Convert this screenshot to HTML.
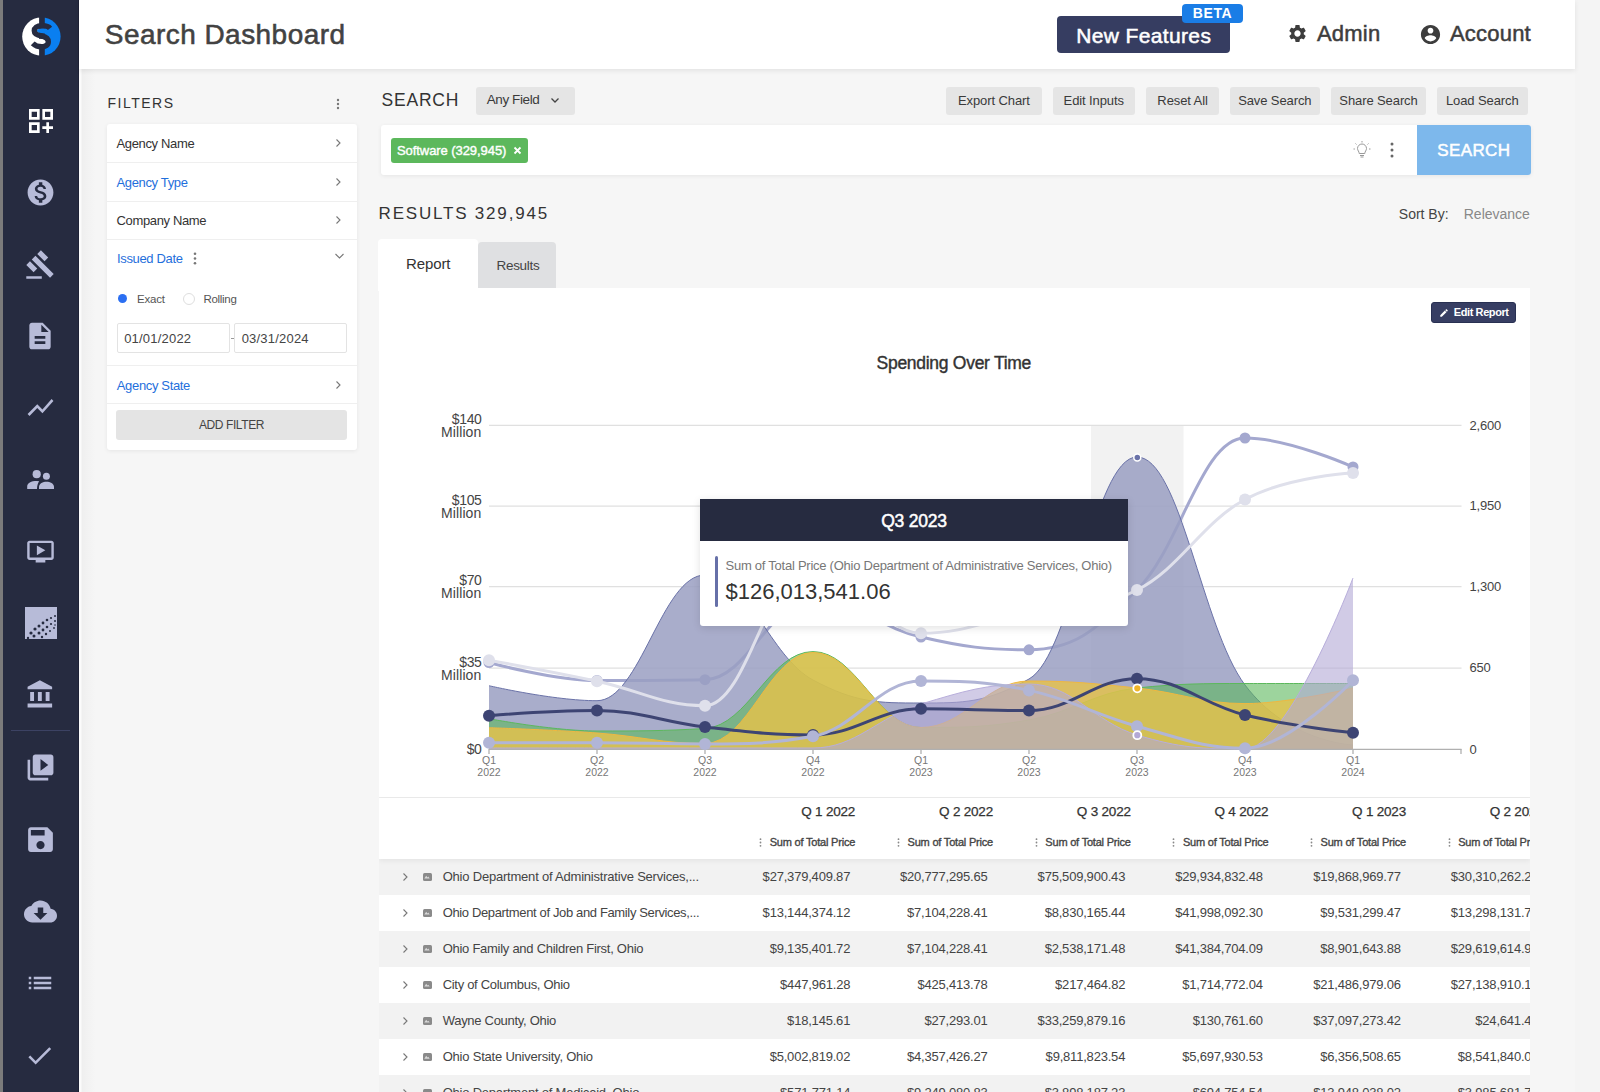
<!DOCTYPE html>
<html><head><meta charset="utf-8"><title>Search Dashboard</title>
<style>
*{box-sizing:border-box;margin:0;padding:0}
html,body{width:1600px;height:1092px;overflow:hidden;background:#f6f6f6;font-family:"Liberation Sans",sans-serif;color:#333}
.a{position:absolute}
.t{position:absolute;white-space:nowrap;line-height:1}
.card{position:absolute;background:#fff;border-radius:3px;box-shadow:0 1px 4px rgba(0,0,0,.07)}
.gbtn{position:absolute;background:#e5e5e5;border-radius:3px;height:28px;top:87px}
.sep{position:absolute;height:1px;background:#efefef}
</style></head>
<body>
<div class="a" style="left:0;top:0;width:3px;height:1092px;background:#7b7b7b"></div>
<div class="a" style="left:3px;top:0;width:76px;height:1092px;background:#262b40;border-right:1px solid #1e2236"></div>
<div class="a" style="left:1575px;top:0;width:25px;height:1092px;background:#f4f4f4"></div>
<div class="a" style="left:79px;top:0;width:16px;height:1092px;background:linear-gradient(90deg,#fbfbfb 0,#fbfbfb 2px,#efefef 3px,#f6f6f6 16px)"></div>
<svg class="a" style="left:19px;top:14px" width="45" height="45" viewBox="-22.4 -22.6 45 45">
<defs><clipPath id="lc"><circle cx="0" cy="0" r="19.2"/></clipPath></defs>
<g clip-path="url(#lc)">
<rect x="-20" y="-20" width="17.7" height="40" fill="#ffffff"/>
<rect x="3.4" y="-20" width="17" height="40" fill="#0a7ff0"/>
<ellipse cx="2.2" cy="-5.8" rx="6.8" ry="2.8" fill="#0a7ff0"/>
<ellipse cx="-0.8" cy="5.0" rx="6" ry="2.8" fill="#ffffff"/>
<path d="M8.6,-8.3 C6.5,-11 3,-10.8 0.3,-10.8 C-4.5,-10.8 -7.1,-8.5 -7.1,-5.8 C-7.1,-2.5 -3.5,-1.2 0.3,-0.6 C4,0.2 6.9,2 6.9,5.2 C6.9,8.5 4,10.2 0.3,10.2 C-3.5,10.2 -6.5,9 -8.7,6.8" fill="none" stroke="#262b40" stroke-width="5.4"/>
</g></svg>
<div class="a" style="left:11px;top:730px;width:59px;height:1px;background:#3c4263"></div>
<svg class="a" style="left:24.50px;top:104.50px" width="32" height="32" viewBox="0 0 24 24"><path fill="#ffffff" d="M3 3h8v8H3zm2 2v4h4V5zm8-2h8v8h-8zm2 2v4h4V5zM3 13h8v8H3zm2 2v4h4v-4zm13-2h-2v3h-3v2h3v3h2v-3h3v-2h-3z"/></svg>
<svg class="a" style="left:25.00px;top:176.50px" width="31" height="31" viewBox="0 0 24 24"><path fill="#b7bbd8" d="M12 2C6.48 2 2 6.48 2 12s4.48 10 10 10 10-4.48 10-10S17.52 2 12 2zm1.41 16.09V20h-2.67v-1.93c-1.71-.36-3.16-1.46-3.27-3.4h1.96c.1 1.05.82 1.87 2.65 1.87 1.96 0 2.4-.98 2.4-1.59 0-.83-.44-1.61-2.67-2.14-2.48-.6-4.18-1.62-4.18-3.67 0-1.72 1.39-2.84 3.11-3.21V4h2.67v1.95c1.860.45 2.79 1.86 2.85 3.39H14.3c-.05-1.11-.64-1.87-2.22-1.870-1.5 0-2.4.68-2.4 1.64 0 .84.65 1.39 2.67 1.91s4.18 1.39 4.18 3.91c-.01 1.83-1.38 2.83-3.12 3.16z"/></svg>
<svg class="a" style="left:24.82px;top:248.50px" width="31" height="31" viewBox="0 0 24 24"><path fill="#b7bbd8" d="M1 21h12v2H1zM5.245 8.07l2.83-2.827 14.14 14.142-2.828 2.828zM12.317 1l5.657 5.656-2.83 2.830-5.654-5.66zM3.825 9.485l5.657 5.657-2.828 2.828-5.657-5.657z"/></svg>
<svg class="a" style="left:24.40px;top:319.80px" width="32" height="32" viewBox="0 0 24 24"><path fill="#b7bbd8" d="M14 2H6c-1.1 0-1.99.9-1.99 2L4 20c0 1.1.89 2 1.99 2H18c1.1 0 2-.9 2-2V8l-6-6zm2 16H8v-2h8v2zm0-4H8v-2h8v2zm-3-5V3.5L18.5 9H13z"/></svg>
<svg class="a" style="left:24.90px;top:392.30px" width="31" height="31" viewBox="0 0 24 24"><path fill="#b7bbd8" d="M3.5 18.49l6-6.01 4 4L22 6.92l-1.41-1.41-7.09 7.97-4-4L2 16.99z"/></svg>
<svg class="a" style="left:20px;top:460px" width="40" height="40" viewBox="20 460 40 40"><g fill="#b7bbd8"><circle cx="36.7" cy="474.2" r="4.1"/><circle cx="46.4" cy="476.2" r="3.5"/><path d="M27.2,489 L27.2,486.5 C27.2,483 31,481 37,481 L39.2,481.2 C37.8,483 37,486 37,489 Z"/><path d="M39,489 L39,487 C39,483.5 43,481.8 46.5,481.8 C50,481.8 54,483.5 54,487 L54,489 Z"/></g></svg>
<svg class="a" style="left:26.10px;top:536.80px" width="29" height="29" viewBox="0 0 24 24"><path fill="#b7bbd8" d="M21 3H3c-1.11 0-2 .89-2 2v12c0 1.1.89 2 2 2h5v2h8v-2h5c1.1 0 1.99-.9 1.99-2L23 5c0-1.11-.9-2-2-2zm0 14H3V5h18v12zM16 11l-7 4V7z"/></svg>
<svg class="a" style="left:24.5px;top:606.5px" width="32" height="32" viewBox="0 0 32 32"><rect x="0" y="0" width="32" height="32" fill="#b7bbd8"/>
<g fill="#262b40"><circle cx="6" cy="26" r="1.6"/><circle cx="10" cy="22" r="1.6"/><circle cx="14" cy="19" r="1.5"/><circle cx="18" cy="16" r="1.4"/><circle cx="22" cy="13" r="1.3"/><circle cx="26" cy="11" r="1.1"/><circle cx="30" cy="9" r="1"/><circle cx="9" cy="29" r="1.5"/><circle cx="14" cy="26" r="1.5"/><circle cx="18" cy="23" r="1.4"/><circle cx="22" cy="20" r="1.3"/><circle cx="26" cy="17" r="1.1"/><circle cx="30" cy="14" r="1"/><circle cx="3" cy="31" r="1.2"/><circle cx="17" cy="30" r="1.2"/><circle cx="21" cy="27" r="1.2"/><circle cx="25" cy="24" r="1"/><circle cx="29" cy="21" r="0.9"/><circle cx="30" cy="18" r="0.8"/></g></svg>
<svg class="a" style="left:25.35px;top:679.15px" width="31" height="31" viewBox="0 0 24 24"><path fill="#b7bbd8" d="M4 10v7h3v-7H4zm6 0v7h3v-7h-3zM2 22h19v-3H2v3zm14-12v7h3v-7h-3zm-4.5-9L2 6v2h19V6l-9.5-5z"/></svg>
<svg class="a" style="left:25.00px;top:752.30px" width="31" height="31" viewBox="0 0 24 24"><path fill="#b7bbd8" d="M4 6H2v14c0 1.1.9 2 2 2h14v-2H4V6zm16-4H8c-1.1 0-2 .9-2 2v12c0 1.1.9 2 2 2h12c1.1 0 2-.9 2-2V4c0-1.1-.9-2-2-2zm-8 12.5v-9l6 4.5-6 4.5z"/></svg>
<svg class="a" style="left:23.90px;top:823.00px" width="33" height="33" viewBox="0 0 24 24"><path fill="#b7bbd8" d="M17 3H5c-1.11 0-2 .9-2 2v14c0 1.1.89 2 2 2h14c1.1 0 2-.9 2-2V7l-4-4zm-5 16c-1.66 0-3-1.34-3-3s1.34-3 3-3 3 1.34 3 3-1.34 3-3 3zm3-10H5V5h10v4z"/></svg>
<svg class="a" style="left:24.00px;top:894.50px" width="33" height="33" viewBox="0 0 24 24"><path fill="#b7bbd8" d="M19.35 10.04C18.67 6.59 15.64 4 12 4 9.11 4 6.6 5.64 5.35 8.04 2.34 8.36 0 10.91 0 14c0 3.31 2.69 6 6 6h13c2.76 0 5-2.24 5-5 0-2.64-2.05-4.78-4.65-4.96zM17 13l-5 5-5-5h3V9h4v4h3z"/></svg>
<svg class="a" style="left:25.40px;top:968.00px" width="30" height="30" viewBox="0 0 24 24"><path fill="#b7bbd8" d="M3 13h2v-2H3v2zm0 4h2v-2H3v2zm0-8h2V7H3v2zm4 4h14v-2H7v2zm0 4h14v-2H7v2zM7 7v2h14V7H7z"/></svg>
<svg class="a" style="left:24.44px;top:1039.61px" width="31" height="31" viewBox="0 0 24 24"><path fill="#b7bbd8" d="M9 16.17L4.83 12l-1.42 1.41L9 19 21 7l-1.41-1.41z"/></svg>
<div class="a" style="left:79px;top:0;width:1496px;height:69px;background:#fff;box-shadow:0 2px 5px rgba(0,0,0,.08)"></div>
<div class="t" style="top:20.80px;font-size:28px;color:#424242;letter-spacing:0.45px;left:104.80px;-webkit-text-stroke:0.55px #424242;">Search Dashboard</div>
<div class="a" style="left:1057px;top:16px;width:173px;height:37px;background:#363d61;border-radius:4px"></div>
<div class="t" style="top:24.72px;font-size:21px;color:#ffffff;letter-spacing:0.35px;left:843.80px;width:600px;text-align:center;-webkit-text-stroke:0.5px #ffffff;">New Features</div>
<div class="a" style="left:1182px;top:4px;width:61px;height:19px;background:#1a7de6;border-radius:4px"></div>
<div class="t" style="top:6.45px;font-size:14px;color:#ffffff;font-weight:700;letter-spacing:0.6px;left:912.50px;width:600px;text-align:center;">BETA</div>
<svg class="a" style="left:1287px;top:23px" width="21" height="21" viewBox="0 0 24 24"><path fill="#3d3d3d" d="M19.14 12.94c.04-.3.06-.61.06-.94 0-.32-.02-.64-.07-.94l2.03-1.58c.18-.14.23-.41.12-.61l-1.92-3.32c-.12-.22-.37-.29-.59-.22l-2.39.96c-.5-.38-1.03-.7-1.62-.94l-.36-2.54c-.04-.24-.24-.41-.48-.41h-3.84c-.24 0-.43.17-.47.41l-.36 2.54c-.59.24-1.13.57-1.62.94l-2.39-.96c-.22-.08-.47 0-.59.22L2.74 8.87c-.12.21-.08.47.12.61l2.03 1.58c-.05.3-.09.63-.09.94s.02.64.07.94l-2.03 1.58c-.18.14-.23.41-.12.61l1.92 3.32c.12.22.37.29.59.22l2.39-.96c.5.38 1.03.7 1.62.94l.36 2.54c.05.24.24.41.48.41h3.84c.24 0 .44-.17.47-.41l.36-2.54c.59-.24 1.13-.56 1.62-.94l2.39.96c.22.08.47 0 .59-.22l1.92-3.32c.12-.22.07-.47-.12-.61l-2.01-1.58zM12 15.6c-1.98 0-3.6-1.62-3.6-3.6s1.62-3.6 3.6-3.6 3.6 1.62 3.6 3.6-1.62 3.6-3.6 3.6z"/></svg>
<div class="t" style="top:23.38px;font-size:22px;color:#3d3d3d;letter-spacing:0.2px;left:1317.00px;-webkit-text-stroke:0.5px #3d3d3d;">Admin</div>
<svg class="a" style="left:1418.5px;top:22.5px" width="23" height="23" viewBox="0 0 24 24"><path fill="#3d3d3d" d="M12 2C6.48 2 2 6.48 2 12s4.48 10 10 10 10-4.48 10-10S17.52 2 12 2zm0 3c1.66 0 3 1.34 3 3s-1.34 3-3 3-3-1.34-3-3 1.34-3 3-3zm0 14.2c-2.5 0-4.71-1.28-6-3.22.03-1.99 4-3.08 6-3.08 1.99 0 5.97 1.09 6 3.08-1.29 1.94-3.5 3.22-6 3.22z"/></svg>
<div class="t" style="top:23.38px;font-size:22px;color:#3d3d3d;letter-spacing:0.2px;left:1450.00px;-webkit-text-stroke:0.5px #3d3d3d;">Account</div>
<div class="t" style="top:96.45px;font-size:14px;color:#333;letter-spacing:1.5px;left:107.50px;">FILTERS</div>
<svg class="a" style="left:336px;top:98px" width="4" height="12" viewBox="0 0 4 12"><circle cx="2" cy="2" r="1.2" fill="#777"/><circle cx="2" cy="6" r="1.2" fill="#777"/><circle cx="2" cy="10" r="1.2" fill="#777"/></svg>
<div class="card" style="left:107px;top:124px;width:250px;height:326px"></div>
<div class="t" style="top:137.30px;font-size:13px;color:#333;letter-spacing:-0.35px;left:116.50px;">Agency Name</div>
<svg class="a" style="left:334px;top:138.3px" width="8" height="10" viewBox="0 0 8 10"><path d="M2.5 1.5 L6 5 L2.5 8.5" fill="none" stroke="#777" stroke-width="1.1"/></svg>
<div class="sep" style="left:107px;top:162.1px;width:250px"></div>
<div class="t" style="top:176.00px;font-size:13px;color:#1f6fdc;letter-spacing:-0.35px;left:116.50px;">Agency Type</div>
<svg class="a" style="left:334px;top:177.0px" width="8" height="10" viewBox="0 0 8 10"><path d="M2.5 1.5 L6 5 L2.5 8.5" fill="none" stroke="#777" stroke-width="1.1"/></svg>
<div class="sep" style="left:107px;top:200.9px;width:250px"></div>
<div class="t" style="top:214.40px;font-size:13px;color:#333;letter-spacing:-0.35px;left:116.50px;">Company Name</div>
<svg class="a" style="left:334px;top:215.4px" width="8" height="10" viewBox="0 0 8 10"><path d="M2.5 1.5 L6 5 L2.5 8.5" fill="none" stroke="#777" stroke-width="1.1"/></svg>
<div class="sep" style="left:107px;top:238.9px;width:250px"></div>
<div class="t" style="top:252.10px;font-size:13px;color:#1f6fdc;letter-spacing:-0.35px;left:117.00px;">Issued Date</div>
<svg class="a" style="left:193px;top:252px" width="4" height="13" viewBox="0 0 4 13"><circle cx="2" cy="1.8" r="1.3" fill="#777"/><circle cx="2" cy="6.5" r="1.3" fill="#777"/><circle cx="2" cy="11.2" r="1.3" fill="#777"/></svg>
<svg class="a" style="left:334px;top:252px" width="11" height="8" viewBox="0 0 11 8"><path d="M1.5 2 L5.5 6 L9.5 2" fill="none" stroke="#777" stroke-width="1.1"/></svg>
<div class="a" style="left:117.7px;top:293.8px;width:9.6px;height:9.6px;border-radius:50%;background:#2b6ff2"></div>
<div class="t" style="top:293.57px;font-size:11.5px;color:#555;letter-spacing:-0.2px;left:137.00px;">Exact</div>
<div class="a" style="left:183px;top:292.6px;width:12px;height:12px;border-radius:50%;border:1px solid #dedede;background:#fff"></div>
<div class="t" style="top:293.57px;font-size:11.5px;color:#555;letter-spacing:-0.3px;left:203.50px;">Rolling</div>
<div class="a" style="left:117px;top:322.5px;width:113px;height:30px;border:1px solid #e3e3e3;border-radius:2px"></div>
<div class="t" style="top:332.10px;font-size:13px;color:#444;letter-spacing:0.2px;left:124.20px;">01/01/2022</div>
<div class="a" style="left:230.5px;top:338px;width:3px;height:1px;background:#999"></div>
<div class="a" style="left:234.4px;top:322.5px;width:112.6px;height:30px;border:1px solid #e3e3e3;border-radius:2px"></div>
<div class="t" style="top:332.10px;font-size:13px;color:#444;letter-spacing:0.2px;left:241.70px;">03/31/2024</div>
<div class="sep" style="left:107px;top:365px;width:250px"></div>
<div class="t" style="top:378.50px;font-size:13px;color:#1f6fdc;letter-spacing:-0.35px;left:116.80px;">Agency State</div>
<svg class="a" style="left:334px;top:379.5px" width="8" height="10" viewBox="0 0 8 10"><path d="M2.5 1.5 L6 5 L2.5 8.5" fill="none" stroke="#777" stroke-width="1.1"/></svg>
<div class="sep" style="left:107px;top:403px;width:250px"></div>
<div class="a" style="left:116.3px;top:409.5px;width:231.2px;height:30.5px;background:#e4e4e4;border-radius:3px"></div>
<div class="t" style="top:418.94px;font-size:12px;color:#444;letter-spacing:-0.4px;left:-68.50px;width:600px;text-align:center;">ADD FILTER</div>
<div class="t" style="top:91.79px;font-size:17.5px;color:#333;letter-spacing:0.8px;left:381.50px;">SEARCH</div>
<div class="a" style="left:476px;top:87px;width:98.5px;height:28px;background:#e5e5e5;border-radius:3px"></div>
<div class="t" style="top:93.27px;font-size:13.5px;color:#3a3a3a;letter-spacing:-0.4px;left:486.70px;">Any Field</div>
<svg class="a" style="left:550px;top:97px" width="10" height="7" viewBox="0 0 10 7"><path d="M1.5 1.5 L5 5 L8.5 1.5" fill="none" stroke="#444" stroke-width="1.3"/></svg>
<div class="gbtn" style="left:946.2px;width:95.4px"></div>
<div class="t" style="top:93.75px;font-size:13px;color:#3a3a3a;letter-spacing:-0.1px;left:693.90px;width:600px;text-align:center;">Export Chart</div>
<div class="gbtn" style="left:1052.5px;width:82.5px"></div>
<div class="t" style="top:93.75px;font-size:13px;color:#3a3a3a;letter-spacing:-0.1px;left:793.75px;width:600px;text-align:center;">Edit Inputs</div>
<div class="gbtn" style="left:1146.3px;width:72.5px"></div>
<div class="t" style="top:93.75px;font-size:13px;color:#3a3a3a;letter-spacing:-0.1px;left:882.55px;width:600px;text-align:center;">Reset All</div>
<div class="gbtn" style="left:1230.0px;width:89.6px"></div>
<div class="t" style="top:93.75px;font-size:13px;color:#3a3a3a;letter-spacing:-0.1px;left:974.80px;width:600px;text-align:center;">Save Search</div>
<div class="gbtn" style="left:1331.0px;width:95.0px"></div>
<div class="t" style="top:93.75px;font-size:13px;color:#3a3a3a;letter-spacing:-0.1px;left:1078.50px;width:600px;text-align:center;">Share Search</div>
<div class="gbtn" style="left:1437.0px;width:90.6px"></div>
<div class="t" style="top:93.75px;font-size:13px;color:#3a3a3a;letter-spacing:-0.1px;left:1182.30px;width:600px;text-align:center;">Load Search</div>
<div class="card" style="left:381px;top:125px;width:1150px;height:50px;border-radius:3px"></div>
<div class="a" style="left:1417px;top:125px;width:114px;height:50px;background:#7db8ec;border-radius:0 3px 3px 0"></div>
<div class="t" style="top:141.51px;font-size:17px;color:#ffffff;letter-spacing:0.4px;left:1173.80px;width:600px;text-align:center;-webkit-text-stroke:0.5px #ffffff;">SEARCH</div>
<div class="a" style="left:391.3px;top:137.8px;width:136.8px;height:24.8px;background:#5cb85c;border-radius:3px"></div>
<div class="t" style="top:143.70px;font-size:13px;color:#ffffff;letter-spacing:-0.07px;left:397.00px;-webkit-text-stroke:0.4px #ffffff;">Software (329,945)</div>
<svg class="a" style="left:513px;top:146px" width="9" height="9" viewBox="0 0 9 9"><path d="M1.5 1.5 L7.5 7.5 M7.5 1.5 L1.5 7.5" stroke="#fff" stroke-width="1.8"/></svg>
<svg class="a" style="left:1352px;top:140px" width="20" height="20" viewBox="0 0 20 20" fill="none" stroke="#999" stroke-width="1">
<path d="M7.2 13.5 C7.2 11.5 5.5 10.5 5.5 8.5 A4.5 4.5 0 0 1 14.5 8.5 C14.5 10.5 12.8 11.5 12.8 13.5 Z"/><path d="M8 15.5 H12 M8.5 17 H11.5"/>
<path d="M10 1 V2.5 M3.5 3.5 L4.5 4.5 M16.5 3.5 L15.5 4.5 M1.5 9 H3 M17 9 H18.5" stroke-dasharray="1 0"/></svg>
<svg class="a" style="left:1390px;top:142px" width="4" height="16" viewBox="0 0 4 16"><circle cx="2" cy="2" r="1.5" fill="#666"/><circle cx="2" cy="8" r="1.5" fill="#666"/><circle cx="2" cy="14" r="1.5" fill="#666"/></svg>
<div class="t" style="top:205.01px;font-size:17px;color:#333;letter-spacing:1.8px;left:378.60px;">RESULTS 329,945</div>
<div class="t" style="top:206.90px;font-size:14px;color:#444;left:1398.80px;">Sort By:</div>
<div class="t" style="top:206.90px;font-size:14px;color:#888;left:1463.75px;">Relevance</div>
<div class="a" style="left:478px;top:242px;width:78px;height:46px;background:#dfe0e2;border-radius:4px 4px 0 0"></div>
<div class="a" style="left:378px;top:239px;width:100px;height:52px;background:#fff;border-radius:4px 4px 0 0"></div>
<div class="t" style="top:256.30px;font-size:15px;color:#333;letter-spacing:-0.1px;left:406.00px;">Report</div>
<div class="t" style="top:258.57px;font-size:13.5px;color:#444;letter-spacing:-0.3px;left:496.50px;">Results</div>
<div class="a" style="left:379px;top:288px;width:1151px;height:509px;background:#fff"></div>
<div class="a" style="left:1431px;top:302px;width:85px;height:21px;background:#373e63;border:1px solid #283052;border-radius:3px"></div>
<svg class="a" style="left:1438.5px;top:307.5px" width="10" height="10" viewBox="0 0 24 24"><path fill="#fff" d="M3 17.25V21h3.75L17.81 9.94l-3.75-3.75L3 17.25zM20.71 7.04c.39-.39.39-1.02 0-1.41l-2.34-2.34c-.39-.39-1.02-.39-1.41 0l-1.83 1.83 3.75 3.75 1.83-1.83z"/></svg>
<div class="t" style="top:307.44px;font-size:11px;color:#ffffff;font-weight:700;letter-spacing:-0.4px;left:1453.75px;">Edit Report</div>
<div class="t" style="top:355.09px;font-size:17.5px;color:#333;letter-spacing:-0.28px;left:653.80px;width:600px;text-align:center;-webkit-text-stroke:0.4px #333;">Spending Over Time</div>
<svg class="a" style="left:0;top:0" width="1600" height="1092" viewBox="0 0 1600 1092"><rect x="1091" y="425" width="92.5" height="324.3" fill="#f2f2f2"/><line x1="489" y1="425.3" x2="1461.5" y2="425.3" stroke="#e0e0e0" stroke-width="1.2"/><line x1="489" y1="506.1" x2="1461.5" y2="506.1" stroke="#e0e0e0" stroke-width="1.2"/><line x1="489" y1="586.6" x2="1461.5" y2="586.6" stroke="#e0e0e0" stroke-width="1.2"/><line x1="489" y1="668.2" x2="1461.5" y2="668.2" stroke="#e0e0e0" stroke-width="1.2"/><path d="M489.00,662.50 C489.00,662.50 553.80,680.50 597.00,680.50 C640.20,680.50 661.80,680.50 705.00,679.70 C748.20,678.90 769.80,600.00 813.00,600.00 C856.20,600.00 877.80,627.04 921.00,637.00 C964.20,646.96 985.80,649.80 1029.00,649.80 C1072.20,649.80 1093.80,632.36 1137.00,590.00 C1180.20,547.64 1201.80,438.00 1245.00,438.00 C1288.20,438.00 1353.00,467.00 1353.00,467.00" fill="none" stroke="#a4a8cf" stroke-width="3" stroke-linejoin="round" stroke-linecap="round"/><circle cx="489" cy="662.5" r="5.5" fill="#a4a8cf"/><circle cx="597" cy="680.5" r="5.5" fill="#a4a8cf"/><circle cx="705" cy="679.7" r="5.5" fill="#a4a8cf"/><circle cx="813" cy="600" r="5.5" fill="#a4a8cf"/><circle cx="921" cy="637" r="5.5" fill="#a4a8cf"/><circle cx="1029" cy="649.8" r="5.5" fill="#a4a8cf"/><circle cx="1137" cy="590" r="5.5" fill="#a4a8cf"/><circle cx="1245" cy="438" r="5.5" fill="#a4a8cf"/><circle cx="1353" cy="467" r="5.5" fill="#a4a8cf"/>
<path d="M489.00,685.70 C489.00,685.70 553.80,700.70 597.00,700.70 C640.20,700.70 661.80,575.00 705.00,575.00 C748.20,575.00 769.80,657.00 813.00,680.00 C856.20,703.00 877.80,703.00 921.00,703.00 C964.20,703.00 985.80,703.00 1029.00,679.00 C1072.20,655.00 1093.80,457.00 1137.00,457.00 C1180.20,457.00 1201.80,627.40 1245.00,685.00 C1288.20,742.60 1353.00,745.00 1353.00,745.00 L1353,749.3 L489,749.3 Z" fill="#9a9fc2" fill-opacity="0.85" stroke="none"/><path d="M489.00,685.70 C489.00,685.70 553.80,700.70 597.00,700.70 C640.20,700.70 661.80,575.00 705.00,575.00 C748.20,575.00 769.80,657.00 813.00,680.00 C856.20,703.00 877.80,703.00 921.00,703.00 C964.20,703.00 985.80,703.00 1029.00,679.00 C1072.20,655.00 1093.80,457.00 1137.00,457.00 C1180.20,457.00 1201.80,627.40 1245.00,685.00 C1288.20,742.60 1353.00,745.00 1353.00,745.00" fill="none" stroke="#6a72a8" stroke-width="1"/>
<path d="M489.00,718.70 C489.00,718.70 553.80,731.00 597.00,731.00 C640.20,731.00 661.80,731.00 705.00,728.50 C748.20,726.00 769.80,651.60 813.00,651.60 C856.20,651.60 877.80,727.50 921.00,727.50 C964.20,727.50 985.80,727.50 1029.00,720.00 C1072.20,712.50 1093.80,692.50 1137.00,688.00 C1180.20,683.50 1201.80,683.50 1245.00,683.50 C1288.20,683.50 1353.00,683.50 1353.00,683.50 L1353,749.3 L489,749.3 Z" fill="#5cb85c" fill-opacity="0.6" stroke="none"/><path d="M489.00,718.70 C489.00,718.70 553.80,731.00 597.00,731.00 C640.20,731.00 661.80,731.00 705.00,728.50 C748.20,726.00 769.80,651.60 813.00,651.60 C856.20,651.60 877.80,727.50 921.00,727.50 C964.20,727.50 985.80,727.50 1029.00,720.00 C1072.20,712.50 1093.80,692.50 1137.00,688.00 C1180.20,683.50 1201.80,683.50 1245.00,683.50 C1288.20,683.50 1353.00,683.50 1353.00,683.50" fill="none" stroke="#5cb85c" stroke-width="1"/>
<path d="M489.00,727.70 C489.00,727.70 553.80,729.84 597.00,733.00 C640.20,736.16 661.80,743.50 705.00,743.50 C748.20,743.50 769.80,652.50 813.00,652.50 C856.20,652.50 877.80,727.50 921.00,727.50 C964.20,727.50 985.80,681.00 1029.00,681.00 C1072.20,681.00 1093.80,683.48 1137.00,688.00 C1180.20,692.52 1201.80,703.60 1245.00,703.60 C1288.20,703.60 1353.00,688.00 1353.00,688.00 L1353,749.3 L489,749.3 Z" fill="#e5c24a" fill-opacity="0.82" stroke="none"/><path d="M489.00,727.70 C489.00,727.70 553.80,729.84 597.00,733.00 C640.20,736.16 661.80,743.50 705.00,743.50 C748.20,743.50 769.80,652.50 813.00,652.50 C856.20,652.50 877.80,727.50 921.00,727.50 C964.20,727.50 985.80,681.00 1029.00,681.00 C1072.20,681.00 1093.80,683.48 1137.00,688.00 C1180.20,692.52 1201.80,703.60 1245.00,703.60 C1288.20,703.60 1353.00,688.00 1353.00,688.00" fill="none" stroke="#f0b840" stroke-width="1"/>
<path d="M489.00,748.00 C489.00,748.00 553.80,748.00 597.00,748.00 C640.20,748.00 661.80,748.00 705.00,748.00 C748.20,748.00 769.80,748.00 813.00,748.00 C856.20,748.00 877.80,716.80 921.00,704.00 C964.20,691.20 985.80,684.00 1029.00,684.00 C1072.20,684.00 1093.80,722.00 1137.00,735.00 C1180.20,748.00 1201.80,749.00 1245.00,749.00 C1288.20,749.00 1353.00,578.00 1353.00,578.00 L1353,749.3 L489,749.3 Z" fill="#b3a8d6" fill-opacity="0.6" stroke="none"/><path d="M489.00,748.00 C489.00,748.00 553.80,748.00 597.00,748.00 C640.20,748.00 661.80,748.00 705.00,748.00 C748.20,748.00 769.80,748.00 813.00,748.00 C856.20,748.00 877.80,716.80 921.00,704.00 C964.20,691.20 985.80,684.00 1029.00,684.00 C1072.20,684.00 1093.80,722.00 1137.00,735.00 C1180.20,748.00 1201.80,749.00 1245.00,749.00 C1288.20,749.00 1353.00,578.00 1353.00,578.00" fill="none" stroke="#b8aedb" stroke-width="1"/>
<line x1="489" y1="749.3" x2="1461.5" y2="749.3" stroke="#b0b0b0" stroke-width="1.3"/><line x1="1461" y1="749" x2="1461" y2="754" stroke="#b0b0b0" stroke-width="1.3"/><line x1="489" y1="749" x2="489" y2="754" stroke="#b0b0b0" stroke-width="1.3"/><line x1="597" y1="749" x2="597" y2="754" stroke="#b0b0b0" stroke-width="1.3"/><line x1="705" y1="749" x2="705" y2="754" stroke="#b0b0b0" stroke-width="1.3"/><line x1="813" y1="749" x2="813" y2="754" stroke="#b0b0b0" stroke-width="1.3"/><line x1="921" y1="749" x2="921" y2="754" stroke="#b0b0b0" stroke-width="1.3"/><line x1="1029" y1="749" x2="1029" y2="754" stroke="#b0b0b0" stroke-width="1.3"/><line x1="1137" y1="749" x2="1137" y2="754" stroke="#b0b0b0" stroke-width="1.3"/><line x1="1245" y1="749" x2="1245" y2="754" stroke="#b0b0b0" stroke-width="1.3"/><line x1="1353" y1="749" x2="1353" y2="754" stroke="#b0b0b0" stroke-width="1.3"/><path d="M489.00,660.20 C489.00,660.20 553.80,672.10 597.00,681.20 C640.20,690.30 661.80,705.70 705.00,705.70 C748.20,705.70 769.80,560.00 813.00,560.00 C856.20,560.00 877.80,633.30 921.00,633.30 C964.20,633.30 985.80,620.66 1029.00,612.00 C1072.20,603.34 1093.80,612.00 1137.00,590.00 C1180.20,568.00 1201.80,522.90 1245.00,499.50 C1288.20,476.10 1353.00,473.00 1353.00,473.00" fill="none" stroke="#dfe0eb" stroke-width="3" stroke-linejoin="round" stroke-linecap="round"/><circle cx="489" cy="660.2" r="6" fill="#dfe0eb"/><circle cx="597" cy="681.2" r="6" fill="#dfe0eb"/><circle cx="705" cy="705.7" r="6" fill="#dfe0eb"/><circle cx="813" cy="560" r="6" fill="#dfe0eb"/><circle cx="921" cy="633.3" r="6" fill="#dfe0eb"/><circle cx="1029" cy="612" r="6" fill="#dfe0eb"/><circle cx="1137" cy="590" r="6" fill="#dfe0eb"/><circle cx="1245" cy="499.5" r="6" fill="#dfe0eb"/><circle cx="1353" cy="473" r="6" fill="#dfe0eb"/>
<path d="M489.00,715.70 C489.00,715.70 553.80,710.50 597.00,710.50 C640.20,710.50 661.80,722.10 705.00,727.00 C748.20,731.90 769.80,735.00 813.00,735.00 C856.20,735.00 877.80,708.80 921.00,708.80 C964.20,708.80 985.80,710.60 1029.00,710.60 C1072.20,710.60 1093.80,678.70 1137.00,678.70 C1180.20,678.70 1201.80,704.20 1245.00,715.00 C1288.20,725.80 1353.00,732.70 1353.00,732.70" fill="none" stroke="#3d4473" stroke-width="3" stroke-linejoin="round" stroke-linecap="round"/><circle cx="489" cy="715.7" r="6" fill="#3d4473"/><circle cx="597" cy="710.5" r="6" fill="#3d4473"/><circle cx="705" cy="727" r="6" fill="#3d4473"/><circle cx="813" cy="735" r="6" fill="#3d4473"/><circle cx="921" cy="708.8" r="6" fill="#3d4473"/><circle cx="1029" cy="710.6" r="6" fill="#3d4473"/><circle cx="1137" cy="678.7" r="6" fill="#3d4473"/><circle cx="1245" cy="715" r="6" fill="#3d4473"/><circle cx="1353" cy="732.7" r="6" fill="#3d4473"/>
<path d="M489.00,742.70 C489.00,742.70 553.80,742.70 597.00,742.70 C640.20,742.70 661.80,744.00 705.00,744.00 C748.20,744.00 769.80,744.00 813.00,736.30 C856.20,728.60 877.80,681.00 921.00,681.00 C964.20,681.00 985.80,681.36 1029.00,690.40 C1072.20,699.44 1093.80,714.62 1137.00,726.20 C1180.20,737.78 1201.80,748.30 1245.00,748.30 C1288.20,748.30 1353.00,680.20 1353.00,680.20" fill="none" stroke="#b1b5d6" stroke-width="3" stroke-linejoin="round" stroke-linecap="round"/><circle cx="489" cy="742.7" r="6" fill="#b1b5d6"/><circle cx="597" cy="742.7" r="6" fill="#b1b5d6"/><circle cx="705" cy="744" r="6" fill="#b1b5d6"/><circle cx="813" cy="736.3" r="6" fill="#b1b5d6"/><circle cx="921" cy="681" r="6" fill="#b1b5d6"/><circle cx="1029" cy="690.4" r="6" fill="#b1b5d6"/><circle cx="1137" cy="726.2" r="6" fill="#b1b5d6"/><circle cx="1245" cy="748.3" r="6" fill="#b1b5d6"/><circle cx="1353" cy="680.2" r="6" fill="#b1b5d6"/>
<circle cx="1137.3" cy="457.5" r="3.5" fill="#6a72a8" stroke="#fff" stroke-width="1.5"/><circle cx="1137.3" cy="688.3" r="4" fill="#f0b428" stroke="#fff" stroke-width="1.8"/><circle cx="1137.3" cy="735.2" r="4" fill="#b3a8d6" stroke="#fff" stroke-width="1.8"/></svg>
<div class="t" style="top:411.75px;font-size:14px;color:#444;letter-spacing:-0.3px;right:1118.40px;">$140</div>
<div class="t" style="top:424.85px;font-size:14px;color:#444;letter-spacing:0.1px;right:1118.60px;">Million</div>
<div class="t" style="top:492.55px;font-size:14px;color:#444;letter-spacing:-0.3px;right:1118.40px;">$105</div>
<div class="t" style="top:505.65px;font-size:14px;color:#444;letter-spacing:0.1px;right:1118.60px;">Million</div>
<div class="t" style="top:573.05px;font-size:14px;color:#444;letter-spacing:-0.3px;right:1118.40px;">$70</div>
<div class="t" style="top:586.15px;font-size:14px;color:#444;letter-spacing:0.1px;right:1118.60px;">Million</div>
<div class="t" style="top:654.65px;font-size:14px;color:#444;letter-spacing:-0.3px;right:1118.40px;">$35</div>
<div class="t" style="top:667.75px;font-size:14px;color:#444;letter-spacing:0.1px;right:1118.60px;">Million</div>
<div class="t" style="top:741.55px;font-size:14px;color:#444;letter-spacing:-0.3px;right:1118.40px;">$0</div>
<div class="t" style="top:418.50px;font-size:13px;color:#444;letter-spacing:-0.2px;left:1469.50px;">2,600</div>
<div class="t" style="top:499.30px;font-size:13px;color:#444;letter-spacing:-0.2px;left:1469.50px;">1,950</div>
<div class="t" style="top:579.80px;font-size:13px;color:#444;letter-spacing:-0.2px;left:1469.50px;">1,300</div>
<div class="t" style="top:661.40px;font-size:13px;color:#444;letter-spacing:-0.2px;left:1469.50px;">650</div>
<div class="t" style="top:742.50px;font-size:13px;color:#444;letter-spacing:-0.2px;left:1469.50px;">0</div>
<div class="t" style="top:755.41px;font-size:10.5px;color:#777;left:189.00px;width:600px;text-align:center;">Q1</div>
<div class="t" style="top:766.71px;font-size:10.5px;color:#777;left:189.00px;width:600px;text-align:center;">2022</div>
<div class="t" style="top:755.41px;font-size:10.5px;color:#777;left:297.00px;width:600px;text-align:center;">Q2</div>
<div class="t" style="top:766.71px;font-size:10.5px;color:#777;left:297.00px;width:600px;text-align:center;">2022</div>
<div class="t" style="top:755.41px;font-size:10.5px;color:#777;left:405.00px;width:600px;text-align:center;">Q3</div>
<div class="t" style="top:766.71px;font-size:10.5px;color:#777;left:405.00px;width:600px;text-align:center;">2022</div>
<div class="t" style="top:755.41px;font-size:10.5px;color:#777;left:513.00px;width:600px;text-align:center;">Q4</div>
<div class="t" style="top:766.71px;font-size:10.5px;color:#777;left:513.00px;width:600px;text-align:center;">2022</div>
<div class="t" style="top:755.41px;font-size:10.5px;color:#777;left:621.00px;width:600px;text-align:center;">Q1</div>
<div class="t" style="top:766.71px;font-size:10.5px;color:#777;left:621.00px;width:600px;text-align:center;">2023</div>
<div class="t" style="top:755.41px;font-size:10.5px;color:#777;left:729.00px;width:600px;text-align:center;">Q2</div>
<div class="t" style="top:766.71px;font-size:10.5px;color:#777;left:729.00px;width:600px;text-align:center;">2023</div>
<div class="t" style="top:755.41px;font-size:10.5px;color:#777;left:837.00px;width:600px;text-align:center;">Q3</div>
<div class="t" style="top:766.71px;font-size:10.5px;color:#777;left:837.00px;width:600px;text-align:center;">2023</div>
<div class="t" style="top:755.41px;font-size:10.5px;color:#777;left:945.00px;width:600px;text-align:center;">Q4</div>
<div class="t" style="top:766.71px;font-size:10.5px;color:#777;left:945.00px;width:600px;text-align:center;">2023</div>
<div class="t" style="top:755.41px;font-size:10.5px;color:#777;left:1053.00px;width:600px;text-align:center;">Q1</div>
<div class="t" style="top:766.71px;font-size:10.5px;color:#777;left:1053.00px;width:600px;text-align:center;">2024</div>
<div class="a" style="left:700px;top:499px;width:428px;height:126.5px;background:#fff;border-radius:0 0 3px 3px;box-shadow:0 2px 8px rgba(0,0,0,.12)"></div>
<div class="a" style="left:700px;top:499px;width:428px;height:41.6px;background:#262b40"></div>
<div class="t" style="top:512.79px;font-size:17.5px;color:#ffffff;letter-spacing:-0.2px;left:614.00px;width:600px;text-align:center;-webkit-text-stroke:0.5px #ffffff;">Q3 2023</div>
<div class="a" style="left:714.8px;top:556px;width:3.4px;height:51px;background:#6670a8;border-radius:2px"></div>
<div class="t" style="top:558.80px;font-size:13px;color:#777;letter-spacing:-0.25px;left:725.50px;">Sum of Total Price (Ohio Department of Administrative Services, Ohio)</div>
<div class="t" style="top:580.78px;font-size:22px;color:#333;left:725.50px;">$126,013,541.06</div>
<div class="a" style="left:379px;top:797px;width:1151px;height:295px;overflow:hidden"><div class="a" style="left:0;top:0;width:1151px;height:1px;background:#ebebeb"></div>
<div class="a" style="left:0;top:61.80px;width:1151px;height:36.03px;background:#f2f2f2"></div>
<div class="a" style="left:0;top:97.83px;width:1151px;height:36.03px;background:#ffffff"></div>
<div class="a" style="left:0;top:133.86px;width:1151px;height:36.03px;background:#f2f2f2"></div>
<div class="a" style="left:0;top:169.89px;width:1151px;height:36.03px;background:#ffffff"></div>
<div class="a" style="left:0;top:205.92px;width:1151px;height:36.03px;background:#f2f2f2"></div>
<div class="a" style="left:0;top:241.95px;width:1151px;height:36.03px;background:#ffffff"></div>
<div class="a" style="left:0;top:277.98px;width:1151px;height:36.03px;background:#f2f2f2"></div>
<div class="a" style="left:0;top:1px;width:1151px;height:61px;background:#fff;box-shadow:0 2px 5px rgba(0,0,0,.06)"></div>
<div class="t" style="top:7.77px;font-size:13.5px;color:#333;letter-spacing:-0.2px;left:176.20px;width:300px;text-align:right;-webkit-text-stroke:0.25px #333;">Q 1 2022</div>
<div class="t" style="top:39.89px;font-size:11px;color:#444;letter-spacing:-0.2px;left:176.20px;width:300px;text-align:right;-webkit-text-stroke:0.35px #444;">Sum of Total Price</div>
<svg class="a" style="left:380.10px;top:41px" width="3" height="9" viewBox="0 0 3 9"><circle cx="1.5" cy="1.2" r="0.9" fill="#888"/><circle cx="1.5" cy="4.5" r="0.9" fill="#888"/><circle cx="1.5" cy="7.8" r="0.9" fill="#888"/></svg>
<div class="t" style="top:7.77px;font-size:13.5px;color:#333;letter-spacing:-0.2px;left:314.00px;width:300px;text-align:right;-webkit-text-stroke:0.25px #333;">Q 2 2022</div>
<div class="t" style="top:39.89px;font-size:11px;color:#444;letter-spacing:-0.2px;left:314.00px;width:300px;text-align:right;-webkit-text-stroke:0.35px #444;">Sum of Total Price</div>
<svg class="a" style="left:517.90px;top:41px" width="3" height="9" viewBox="0 0 3 9"><circle cx="1.5" cy="1.2" r="0.9" fill="#888"/><circle cx="1.5" cy="4.5" r="0.9" fill="#888"/><circle cx="1.5" cy="7.8" r="0.9" fill="#888"/></svg>
<div class="t" style="top:7.77px;font-size:13.5px;color:#333;letter-spacing:-0.2px;left:451.80px;width:300px;text-align:right;-webkit-text-stroke:0.25px #333;">Q 3 2022</div>
<div class="t" style="top:39.89px;font-size:11px;color:#444;letter-spacing:-0.2px;left:451.80px;width:300px;text-align:right;-webkit-text-stroke:0.35px #444;">Sum of Total Price</div>
<svg class="a" style="left:655.70px;top:41px" width="3" height="9" viewBox="0 0 3 9"><circle cx="1.5" cy="1.2" r="0.9" fill="#888"/><circle cx="1.5" cy="4.5" r="0.9" fill="#888"/><circle cx="1.5" cy="7.8" r="0.9" fill="#888"/></svg>
<div class="t" style="top:7.77px;font-size:13.5px;color:#333;letter-spacing:-0.2px;left:589.40px;width:300px;text-align:right;-webkit-text-stroke:0.25px #333;">Q 4 2022</div>
<div class="t" style="top:39.89px;font-size:11px;color:#444;letter-spacing:-0.2px;left:589.40px;width:300px;text-align:right;-webkit-text-stroke:0.35px #444;">Sum of Total Price</div>
<svg class="a" style="left:793.30px;top:41px" width="3" height="9" viewBox="0 0 3 9"><circle cx="1.5" cy="1.2" r="0.9" fill="#888"/><circle cx="1.5" cy="4.5" r="0.9" fill="#888"/><circle cx="1.5" cy="7.8" r="0.9" fill="#888"/></svg>
<div class="t" style="top:7.77px;font-size:13.5px;color:#333;letter-spacing:-0.2px;left:727.00px;width:300px;text-align:right;-webkit-text-stroke:0.25px #333;">Q 1 2023</div>
<div class="t" style="top:39.89px;font-size:11px;color:#444;letter-spacing:-0.2px;left:727.00px;width:300px;text-align:right;-webkit-text-stroke:0.35px #444;">Sum of Total Price</div>
<svg class="a" style="left:930.90px;top:41px" width="3" height="9" viewBox="0 0 3 9"><circle cx="1.5" cy="1.2" r="0.9" fill="#888"/><circle cx="1.5" cy="4.5" r="0.9" fill="#888"/><circle cx="1.5" cy="7.8" r="0.9" fill="#888"/></svg>
<div class="t" style="top:7.77px;font-size:13.5px;color:#333;letter-spacing:-0.2px;left:864.60px;width:300px;text-align:right;-webkit-text-stroke:0.25px #333;">Q 2 2023</div>
<div class="t" style="top:39.89px;font-size:11px;color:#444;letter-spacing:-0.2px;left:864.60px;width:300px;text-align:right;-webkit-text-stroke:0.35px #444;">Sum of Total Price</div>
<svg class="a" style="left:1068.50px;top:41px" width="3" height="9" viewBox="0 0 3 9"><circle cx="1.5" cy="1.2" r="0.9" fill="#888"/><circle cx="1.5" cy="4.5" r="0.9" fill="#888"/><circle cx="1.5" cy="7.8" r="0.9" fill="#888"/></svg>
<svg class="a" style="left:22px;top:74.80px" width="8" height="10" viewBox="0 0 8 10"><path d="M2.5 1.5 L6 5 L2.5 8.5" fill="none" stroke="#777" stroke-width="1.1"/></svg>
<div class="a" style="left:43.5px;top:75.50px;width:9px;height:8.5px;background:#8a8a8a;border-radius:1.5px"></div>
<div class="a" style="left:45.30000000000001px;top:78.00px;width:5.4px;height:3.5px;background:#d9d9d9;clip-path:polygon(0 100%,35% 20%,60% 70%,75% 45%,100% 100%)"></div>
<div class="t" style="top:72.50px;font-size:13px;color:#444;letter-spacing:-0.21px;left:63.70px;">Ohio Department of Administrative Services,...</div>
<div class="t" style="top:72.50px;font-size:13px;color:#444;letter-spacing:-0.2px;left:171.20px;width:300px;text-align:right;">$27,379,409.87</div>
<div class="t" style="top:72.50px;font-size:13px;color:#444;letter-spacing:-0.2px;left:308.60px;width:300px;text-align:right;">$20,777,295.65</div>
<div class="t" style="top:72.50px;font-size:13px;color:#444;letter-spacing:-0.2px;left:446.20px;width:300px;text-align:right;">$75,509,900.43</div>
<div class="t" style="top:72.50px;font-size:13px;color:#444;letter-spacing:-0.2px;left:583.80px;width:300px;text-align:right;">$29,934,832.48</div>
<div class="t" style="top:72.50px;font-size:13px;color:#444;letter-spacing:-0.2px;left:721.80px;width:300px;text-align:right;">$19,868,969.77</div>
<div class="t" style="top:72.50px;font-size:13px;color:#444;letter-spacing:-0.2px;left:859.40px;width:300px;text-align:right;">$30,310,262.22</div>
<svg class="a" style="left:22px;top:110.83px" width="8" height="10" viewBox="0 0 8 10"><path d="M2.5 1.5 L6 5 L2.5 8.5" fill="none" stroke="#777" stroke-width="1.1"/></svg>
<div class="a" style="left:43.5px;top:111.53px;width:9px;height:8.5px;background:#8a8a8a;border-radius:1.5px"></div>
<div class="a" style="left:45.30000000000001px;top:114.03px;width:5.4px;height:3.5px;background:#d9d9d9;clip-path:polygon(0 100%,35% 20%,60% 70%,75% 45%,100% 100%)"></div>
<div class="t" style="top:108.53px;font-size:13px;color:#444;letter-spacing:-0.36px;left:63.70px;">Ohio Department of Job and Family Services,...</div>
<div class="t" style="top:108.53px;font-size:13px;color:#444;letter-spacing:-0.2px;left:171.20px;width:300px;text-align:right;">$13,144,374.12</div>
<div class="t" style="top:108.53px;font-size:13px;color:#444;letter-spacing:-0.2px;left:308.60px;width:300px;text-align:right;">$7,104,228.41</div>
<div class="t" style="top:108.53px;font-size:13px;color:#444;letter-spacing:-0.2px;left:446.20px;width:300px;text-align:right;">$8,830,165.44</div>
<div class="t" style="top:108.53px;font-size:13px;color:#444;letter-spacing:-0.2px;left:583.80px;width:300px;text-align:right;">$41,998,092.30</div>
<div class="t" style="top:108.53px;font-size:13px;color:#444;letter-spacing:-0.2px;left:721.80px;width:300px;text-align:right;">$9,531,299.47</div>
<div class="t" style="top:108.53px;font-size:13px;color:#444;letter-spacing:-0.2px;left:859.40px;width:300px;text-align:right;">$13,298,131.75</div>
<svg class="a" style="left:22px;top:146.86px" width="8" height="10" viewBox="0 0 8 10"><path d="M2.5 1.5 L6 5 L2.5 8.5" fill="none" stroke="#777" stroke-width="1.1"/></svg>
<div class="a" style="left:43.5px;top:147.56px;width:9px;height:8.5px;background:#8a8a8a;border-radius:1.5px"></div>
<div class="a" style="left:45.30000000000001px;top:150.06px;width:5.4px;height:3.5px;background:#d9d9d9;clip-path:polygon(0 100%,35% 20%,60% 70%,75% 45%,100% 100%)"></div>
<div class="t" style="top:144.56px;font-size:13px;color:#444;letter-spacing:-0.27px;left:63.70px;">Ohio Family and Children First, Ohio</div>
<div class="t" style="top:144.56px;font-size:13px;color:#444;letter-spacing:-0.2px;left:171.20px;width:300px;text-align:right;">$9,135,401.72</div>
<div class="t" style="top:144.56px;font-size:13px;color:#444;letter-spacing:-0.2px;left:308.60px;width:300px;text-align:right;">$7,104,228.41</div>
<div class="t" style="top:144.56px;font-size:13px;color:#444;letter-spacing:-0.2px;left:446.20px;width:300px;text-align:right;">$2,538,171.48</div>
<div class="t" style="top:144.56px;font-size:13px;color:#444;letter-spacing:-0.2px;left:583.80px;width:300px;text-align:right;">$41,384,704.09</div>
<div class="t" style="top:144.56px;font-size:13px;color:#444;letter-spacing:-0.2px;left:721.80px;width:300px;text-align:right;">$8,901,643.88</div>
<div class="t" style="top:144.56px;font-size:13px;color:#444;letter-spacing:-0.2px;left:859.40px;width:300px;text-align:right;">$29,619,614.93</div>
<svg class="a" style="left:22px;top:182.89px" width="8" height="10" viewBox="0 0 8 10"><path d="M2.5 1.5 L6 5 L2.5 8.5" fill="none" stroke="#777" stroke-width="1.1"/></svg>
<div class="a" style="left:43.5px;top:183.59px;width:9px;height:8.5px;background:#8a8a8a;border-radius:1.5px"></div>
<div class="a" style="left:45.30000000000001px;top:186.09px;width:5.4px;height:3.5px;background:#d9d9d9;clip-path:polygon(0 100%,35% 20%,60% 70%,75% 45%,100% 100%)"></div>
<div class="t" style="top:180.59px;font-size:13px;color:#444;letter-spacing:-0.3px;left:63.70px;">City of Columbus, Ohio</div>
<div class="t" style="top:180.59px;font-size:13px;color:#444;letter-spacing:-0.2px;left:171.20px;width:300px;text-align:right;">$447,961.28</div>
<div class="t" style="top:180.59px;font-size:13px;color:#444;letter-spacing:-0.2px;left:308.60px;width:300px;text-align:right;">$425,413.78</div>
<div class="t" style="top:180.59px;font-size:13px;color:#444;letter-spacing:-0.2px;left:446.20px;width:300px;text-align:right;">$217,464.82</div>
<div class="t" style="top:180.59px;font-size:13px;color:#444;letter-spacing:-0.2px;left:583.80px;width:300px;text-align:right;">$1,714,772.04</div>
<div class="t" style="top:180.59px;font-size:13px;color:#444;letter-spacing:-0.2px;left:721.80px;width:300px;text-align:right;">$21,486,979.06</div>
<div class="t" style="top:180.59px;font-size:13px;color:#444;letter-spacing:-0.2px;left:859.40px;width:300px;text-align:right;">$27,138,910.13</div>
<svg class="a" style="left:22px;top:218.92px" width="8" height="10" viewBox="0 0 8 10"><path d="M2.5 1.5 L6 5 L2.5 8.5" fill="none" stroke="#777" stroke-width="1.1"/></svg>
<div class="a" style="left:43.5px;top:219.62px;width:9px;height:8.5px;background:#8a8a8a;border-radius:1.5px"></div>
<div class="a" style="left:45.30000000000001px;top:222.12px;width:5.4px;height:3.5px;background:#d9d9d9;clip-path:polygon(0 100%,35% 20%,60% 70%,75% 45%,100% 100%)"></div>
<div class="t" style="top:216.62px;font-size:13px;color:#444;letter-spacing:-0.29px;left:63.70px;">Wayne County, Ohio</div>
<div class="t" style="top:216.62px;font-size:13px;color:#444;letter-spacing:-0.2px;left:171.20px;width:300px;text-align:right;">$18,145.61</div>
<div class="t" style="top:216.62px;font-size:13px;color:#444;letter-spacing:-0.2px;left:308.60px;width:300px;text-align:right;">$27,293.01</div>
<div class="t" style="top:216.62px;font-size:13px;color:#444;letter-spacing:-0.2px;left:446.20px;width:300px;text-align:right;">$33,259,879.16</div>
<div class="t" style="top:216.62px;font-size:13px;color:#444;letter-spacing:-0.2px;left:583.80px;width:300px;text-align:right;">$130,761.60</div>
<div class="t" style="top:216.62px;font-size:13px;color:#444;letter-spacing:-0.2px;left:721.80px;width:300px;text-align:right;">$37,097,273.42</div>
<div class="t" style="top:216.62px;font-size:13px;color:#444;letter-spacing:-0.2px;left:859.40px;width:300px;text-align:right;">$24,641.44</div>
<svg class="a" style="left:22px;top:254.95px" width="8" height="10" viewBox="0 0 8 10"><path d="M2.5 1.5 L6 5 L2.5 8.5" fill="none" stroke="#777" stroke-width="1.1"/></svg>
<div class="a" style="left:43.5px;top:255.65px;width:9px;height:8.5px;background:#8a8a8a;border-radius:1.5px"></div>
<div class="a" style="left:45.30000000000001px;top:258.15px;width:5.4px;height:3.5px;background:#d9d9d9;clip-path:polygon(0 100%,35% 20%,60% 70%,75% 45%,100% 100%)"></div>
<div class="t" style="top:252.65px;font-size:13px;color:#444;letter-spacing:-0.21px;left:63.70px;">Ohio State University, Ohio</div>
<div class="t" style="top:252.65px;font-size:13px;color:#444;letter-spacing:-0.2px;left:171.20px;width:300px;text-align:right;">$5,002,819.02</div>
<div class="t" style="top:252.65px;font-size:13px;color:#444;letter-spacing:-0.2px;left:308.60px;width:300px;text-align:right;">$4,357,426.27</div>
<div class="t" style="top:252.65px;font-size:13px;color:#444;letter-spacing:-0.2px;left:446.20px;width:300px;text-align:right;">$9,811,823.54</div>
<div class="t" style="top:252.65px;font-size:13px;color:#444;letter-spacing:-0.2px;left:583.80px;width:300px;text-align:right;">$5,697,930.53</div>
<div class="t" style="top:252.65px;font-size:13px;color:#444;letter-spacing:-0.2px;left:721.80px;width:300px;text-align:right;">$6,356,508.65</div>
<div class="t" style="top:252.65px;font-size:13px;color:#444;letter-spacing:-0.2px;left:859.40px;width:300px;text-align:right;">$8,541,840.05</div>
<svg class="a" style="left:22px;top:290.98px" width="8" height="10" viewBox="0 0 8 10"><path d="M2.5 1.5 L6 5 L2.5 8.5" fill="none" stroke="#777" stroke-width="1.1"/></svg>
<div class="a" style="left:43.5px;top:291.68px;width:9px;height:8.5px;background:#8a8a8a;border-radius:1.5px"></div>
<div class="a" style="left:45.30000000000001px;top:294.18px;width:5.4px;height:3.5px;background:#d9d9d9;clip-path:polygon(0 100%,35% 20%,60% 70%,75% 45%,100% 100%)"></div>
<div class="t" style="top:288.68px;font-size:13px;color:#444;letter-spacing:-0.22px;left:63.70px;">Ohio Department of Medicaid, Ohio</div>
<div class="t" style="top:288.68px;font-size:13px;color:#444;letter-spacing:-0.2px;left:171.20px;width:300px;text-align:right;">$571,771.14</div>
<div class="t" style="top:288.68px;font-size:13px;color:#444;letter-spacing:-0.2px;left:308.60px;width:300px;text-align:right;">$9,249,080.83</div>
<div class="t" style="top:288.68px;font-size:13px;color:#444;letter-spacing:-0.2px;left:446.20px;width:300px;text-align:right;">$3,898,187.23</div>
<div class="t" style="top:288.68px;font-size:13px;color:#444;letter-spacing:-0.2px;left:583.80px;width:300px;text-align:right;">$694,754.54</div>
<div class="t" style="top:288.68px;font-size:13px;color:#444;letter-spacing:-0.2px;left:721.80px;width:300px;text-align:right;">$13,948,038.02</div>
<div class="t" style="top:288.68px;font-size:13px;color:#444;letter-spacing:-0.2px;left:859.40px;width:300px;text-align:right;">$3,985,681.75</div>
</div>
</body></html>
